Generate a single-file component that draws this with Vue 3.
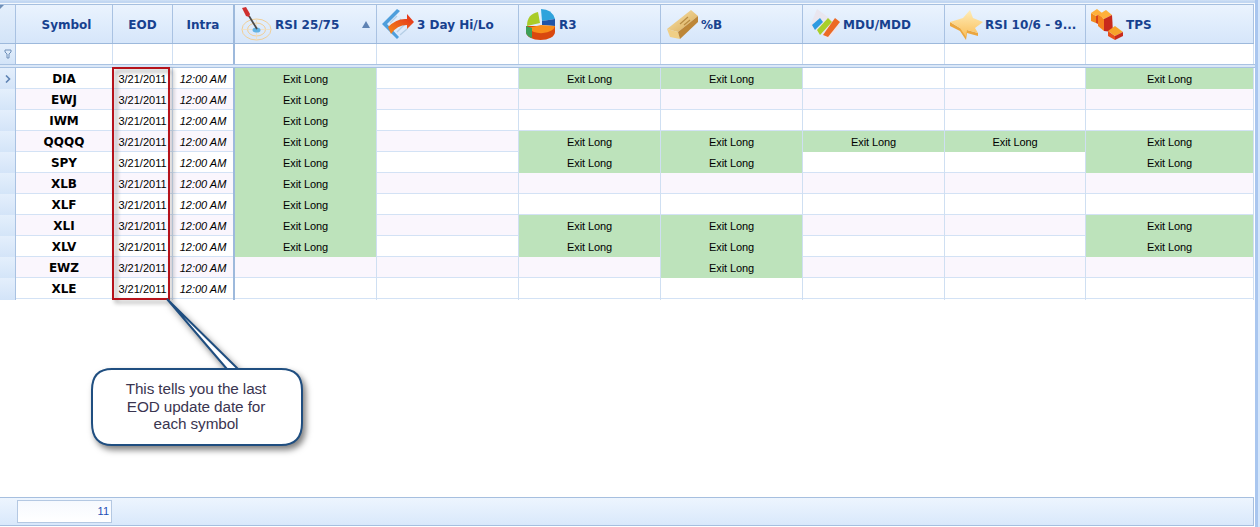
<script setup>
const columns = [
  { label: 'RSI 25/75', icon: 'target', sorted: true },
  { label: '3 Day Hi/Lo', icon: 'arrow' },
  { label: 'R3', icon: 'pie' },
  { label: '%B', icon: 'gold' },
  { label: 'MDU/MDD', icon: 'bars' },
  { label: 'RSI 10/6 - 9...', icon: 'star' },
  { label: 'TPS', icon: 'podium' }
]

// 1 = signal shown in that indicator column
const rows = [
  { symbol: 'DIA', signals: [1, 0, 1, 1, 0, 0, 1] },
  { symbol: 'EWJ', signals: [1, 0, 0, 0, 0, 0, 0] },
  { symbol: 'IWM', signals: [1, 0, 0, 0, 0, 0, 0] },
  { symbol: 'QQQQ', signals: [1, 0, 1, 1, 1, 1, 1] },
  { symbol: 'SPY', signals: [1, 0, 1, 1, 0, 0, 1] },
  { symbol: 'XLB', signals: [1, 0, 0, 0, 0, 0, 0] },
  { symbol: 'XLF', signals: [1, 0, 0, 0, 0, 0, 0] },
  { symbol: 'XLI', signals: [1, 0, 1, 1, 0, 0, 1] },
  { symbol: 'XLV', signals: [1, 0, 1, 1, 0, 0, 1] },
  { symbol: 'EWZ', signals: [0, 0, 0, 1, 0, 0, 0] },
  { symbol: 'XLE', signals: [0, 0, 0, 0, 0, 0, 0] }
]
</script>

<template>
  <div class="screen">
    <svg class="icon-defs" width="0" height="0">
      <defs>
        <linearGradient id="goldTop" x1="0" y1="0" x2="1" y2="1">
          <stop offset="0" stop-color="#f8e6b4" />
          <stop offset="1" stop-color="#d9a850" />
        </linearGradient>
        <linearGradient id="starFill" x1="0" y1="0" x2="0" y2="1">
          <stop offset="0" stop-color="#ffedb8" />
          <stop offset="1" stop-color="#f9bf5c" />
        </linearGradient>
        <linearGradient id="arrowFill" x1="0" y1="1" x2="1" y2="0">
          <stop offset="0" stop-color="#f48a1c" />
          <stop offset="1" stop-color="#e32a1a" />
        </linearGradient>
      </defs>
    </svg>

    <div class="grid-panel">
      <div class="top-strip"></div>

      <div class="row header-row">
        <div class="cell indicator corner"></div>
        <div class="cell head-text symbol-head">Symbol</div>
        <div class="cell head-text">EOD</div>
        <div class="cell head-text thick">Intra</div>
        <div v-for="col in columns" :key="col.label" class="cell head-icon">
          <svg class="col-icon" viewBox="0 0 36 36">
            <g v-if="col.icon === 'target'">
              <ellipse cx="17.5" cy="23.5" rx="14.5" ry="10.5" fill="none" stroke="#f0cf98" />
              <ellipse cx="17.5" cy="23.5" rx="9" ry="6.5" fill="none" stroke="#f0cf98" />
              <path d="M3 23.5 H32 M17.5 13 V34" stroke="#f3dcb6" stroke-width="0.7" />
              <ellipse cx="17.5" cy="24" rx="4" ry="2.6" fill="#62b3e4" />
              <path d="M18 23 L10 10" stroke="#4a4a4a" stroke-width="1.8" />
              <path d="M3 2 L7 1 L11 8 L10 11 L7 10 Z" fill="#cf3030" />
            </g>
            <g v-else-if="col.icon === 'arrow'">
              <path d="M1 18 L16 3 L19 5 L6 18 L18 31 L16 33 Z" fill="#4f9fdc" />
              <path d="M9 17 L16 10 M12 21 L20 13 M16 26 L24 18 M19 29 L26 23" stroke="#b6cfe6" stroke-width="1.4" />
              <path d="M7 21 Q16 12 26 13 L26 8 L33 16 L26 23 L26 19 Q16 19 10 28 Z" fill="url(#arrowFill)" />
            </g>
            <g v-else-if="col.icon === 'pie'">
              <path d="M3 20 V26 A14.5 8 0 0 0 32 26 V20 Z" fill="#d9480f" />
              <path d="M17 17 L4 20 Q4 8 15 6 Z" fill="#a9cc28" />
              <path d="M18 3 Q29 3 32 13 L19 15 Z" fill="#2fa3dc" />
              <path d="M19 15 L32 13 L32 20 L19 19 Z" fill="#1f55a8" />
              <path d="M5 22 L18 19 L32 20 A14 8 0 0 1 5 22 Z" fill="#f88e1a" />
              <path d="M3 20 L9 22 V32 Q3 30 3 26 Z" fill="#3da05a" />
            </g>
            <g v-else-if="col.icon === 'gold'">
              <path d="M2 23 L26 4 L33 10 L13 26 Z" fill="url(#goldTop)" />
              <path d="M2 23 L13 26 L15 33 L5 31 Z" fill="#f0cf86" />
              <path d="M13 26 L33 10 L33 16 L15 33 Z" fill="#bd8637" />
              <path d="M15 18 L23 11 M19 19 L25 14" stroke="#b88c44" stroke-width="1.2" />
            </g>
            <g v-else-if="col.icon === 'bars'">
              <path d="M10 3 L33 20 L22 34 L3 20 Z" fill="#e9e6ef" />
              <path d="M5 19 L13 12 L16 16 L8 24 Z" fill="#2f9ae0" />
              <path d="M10 24 L21 12 L25 16 L13 29 Z" fill="#a8cf2a" />
              <path d="M16 29 L28 12 L33 16 L21 31 Z" fill="#ec6a25" />
            </g>
            <g v-else-if="col.icon === 'star'">
              <path d="M1 16 L1 20 L11 25 L17 34 L18 27 L29 30 L29 27 L11 22 Z" fill="#eba63f" />
              <path d="M1 16 L14 12 L21 4 L24 12 L34 16 L26 22 L29 27 L18 24 L17 31 L11 22 Z" fill="url(#starFill)" />
            </g>
            <g v-else>
              <path d="M1 7 L6 10 V17 L1 15 Z" fill="#f08a1e" />
              <path d="M1 7 L7 3 L12 7 L6 10 Z" fill="#ffb03a" />
              <path d="M6 10 L12 7 V20 L6 17 Z" fill="#d8431c" />
              <path d="M8 9 L14 13 V25 L8 20 Z" fill="#f5821f" />
              <path d="M8 9 L16 4 L22 9 L14 13 Z" fill="#ffb03a" />
              <path d="M14 13 L22 9 L23 26 L14 25 Z" fill="#c82a1c" />
              <path d="M18 25 L25 30 V34 L18 30 Z" fill="#e8501c" />
              <path d="M18 25 L25 20 L33 26 L25 30 Z" fill="#f6a32a" />
              <path d="M25 30 L33 26 V30 L25 34 Z" fill="#c82a1c" />
            </g>
          </svg>
          <span class="head-label">{{ col.label }}</span>
          <svg v-if="col.sorted" class="sort-mark" viewBox="0 0 8 7">
            <path d="M4 0 L8 7 H0 Z" />
          </svg>
        </div>
      </div>

      <div class="row filter-row">
        <div class="cell indicator">
          <svg class="filter-icon" viewBox="0 0 8 10">
            <path d="M1 1 H7 V3 L5 5 V9 H3 V5 L1 3 Z" />
          </svg>
        </div>
        <div class="cell"></div>
        <div class="cell"></div>
        <div class="cell thick"></div>
        <div v-for="col in columns" :key="col.label" class="cell"></div>
      </div>

      <div class="body-gap"></div>

      <div
        v-for="(row, i) in rows"
        :key="row.symbol"
        class="row data-row"
        :class="{ alt: i % 2 === 1 }"
      >
        <div class="cell indicator">
          <svg v-if="i === 0" class="current-mark" viewBox="0 0 6 8">
            <path d="M1 0.5 L4.5 4 L1 7.5" />
          </svg>
        </div>
        <div class="cell symbol">{{ row.symbol }}</div>
        <div class="cell date">3/21/2011</div>
        <div class="cell time thick">12:00 AM</div>
        <div
          v-for="(on, c) in row.signals"
          :key="c"
          class="cell signal"
          :class="{ on: on }"
        >{{ on ? 'Exit Long' : '' }}</div>
      </div>

      <div class="spacer"></div>

      <div class="footer">
        <div class="count-box">11</div>
      </div>
    </div>

    <div class="right-edge"></div>

    <div class="highlight"></div>

    <div class="callout">
      <svg class="callout-shape" viewBox="0 0 222 160">
        <path
          class="shape-line"
          d="M137 72 H191 Q212 72 212 93 V126 Q212 148 191 148 H22 Q2 148 2 126 V93 Q2 72 22 72 H137 L77 2 L148 72 Z"
        />
      </svg>
      <p class="callout-text">This tells you the last EOD update date for each symbol</p>
    </div>
  </div>
</template>

<style scoped>
.screen {
  position: relative;
  display: flex;
  width: 1260px;
  height: 527px;
  overflow: hidden;
  background: #fff;
  font-family: "Liberation Sans", Arial, sans-serif;
}

.icon-defs {
  position: absolute;
}

.grid-panel {
  display: flex;
  flex-direction: column;
  flex: none;
  width: 1255px;
  height: 527px;
}

.right-edge {
  flex: 1;
  background: linear-gradient(to right, #a9c6ef 0, #a9c6ef 3px, #d5e6fb 3px);
}

.top-strip {
  height: 4px;
  flex: none;
  background: linear-gradient(#d5e4f7 0, #c2d7f2 1px, #c2d7f2 3px, #f4f8fd 3px);
}

.row {
  display: grid;
  grid-template-columns: 16px 97px 60px 62px 142px 142px 142px 142px 142px 141px 168px;
  width: 1254px;
  flex: none;
}

.cell {
  box-sizing: border-box;
  border-right: 1px solid #cfdff2;
  min-width: 0;
}

.cell.thick {
  border-right: 2px solid #9db9dc;
}

.indicator {
  background: linear-gradient(#e4effc, #d3e4f8);
  border-right: 1px solid #a9c2e2;
  display: flex;
  align-items: center;
  justify-content: center;
}

.header-row {
  height: 40px;
  background: linear-gradient(#eaf3fe, #d6e6fa);
  border-top: 1px solid #a6bfdf;
  border-bottom: 1px solid #9db9dc;
  box-sizing: border-box;
  color: #17418f;
  font-family: "DejaVu Sans", Verdana, sans-serif;
  font-size: 12px;
  font-weight: bold;
}

.header-row .cell {
  border-right: 1px solid #a9c2e2;
}

.header-row .cell.thick {
  border-right: 2px solid #9db9dc;
}

.corner {
  position: relative;
}

.corner::before {
  content: "";
  position: absolute;
  left: 0;
  top: 0;
  border-top: 4px solid #6f8fb8;
  border-right: 4px solid transparent;
}

.head-text {
  display: flex;
  align-items: center;
  justify-content: center;
  padding-top: 2px;
}

.symbol-head {
  padding-left: 5px;
}

.head-icon {
  display: flex;
  align-items: center;
  padding-left: 4px;
  position: relative;
  white-space: nowrap;
  overflow: hidden;
}

.head-label {
  padding-top: 2px;
}

.col-icon {
  width: 36px;
  height: 36px;
  flex: none;
}

.sort-mark {
  position: absolute;
  right: 6px;
  top: 16px;
  width: 8px;
  height: 7px;
  fill: #5f83b4;
}

.filter-row {
  height: 20px;
  background: #fff;
}

.filter-icon {
  width: 8px;
  height: 10px;
  fill: none;
  stroke: #6f8fb8;
  stroke-width: 1;
}

.body-gap {
  height: 4px;
  flex: none;
  border-top: 1px solid #a9c2e2;
  border-bottom: 1px solid #a9c2e2;
  background: #dbe8f8;
  box-sizing: border-box;
}

.data-row {
  height: 21px;
  background: #fff;
  border-bottom: 1px solid #d3e2f5;
  box-sizing: border-box;
  font-size: 11px;
  line-height: 22px;
  color: #000;
  text-align: center;
}

.data-row.alt {
  background: #faf6fd;
}

.symbol {
  font-family: "DejaVu Sans", Verdana, sans-serif;
  font-size: 12px;
  font-weight: bold;
}

.time {
  font-style: italic;
}

.signal {
  letter-spacing: -0.1px;
}

.signal.on {
  background: #bde3bb;
}

.current-mark {
  width: 6px;
  height: 8px;
  fill: none;
  stroke: #5f83b4;
  stroke-width: 1.6;
}

.spacer {
  flex: 1;
}

.footer {
  height: 29px;
  flex: none;
  box-sizing: border-box;
  margin-bottom: 1px;
  padding: 2px 0 0 17px;
  width: 1254px;
  background: linear-gradient(#edf5fe, #d9e8fb);
  border: 1px solid #a6bfdf;
  border-left: none;
}

.count-box {
  width: 95px;
  height: 23px;
  box-sizing: border-box;
  background: linear-gradient(#f6f9fe, #fff);
  border: 1px solid #b4c8e2;
  color: #1f4fb5;
  font-size: 11px;
  line-height: 21px;
  text-align: right;
  padding-right: 2px;
}

.highlight {
  position: absolute;
  left: 112px;
  top: 67px;
  width: 58px;
  height: 233px;
  box-sizing: border-box;
  border: 2px solid #b5121b;
  filter: drop-shadow(3px 3px 2px rgba(0, 0, 0, 0.4));
}

.callout {
  position: absolute;
  left: 90px;
  top: 297px;
  width: 222px;
  height: 160px;
}

.callout-shape {
  display: block;
  width: 222px;
  height: 160px;
  filter: drop-shadow(3px 4px 3px rgba(0, 0, 0, 0.5));
}

.shape-line {
  fill: #fff;
  stroke: #1f4e80;
  stroke-width: 2;
}

.callout-text {
  position: absolute;
  left: 26px;
  top: 83px;
  width: 160px;
  margin: 0;
  font-size: 15.3px;
  line-height: 17.5px;
  letter-spacing: -0.1px;
  text-align: center;
  color: #3a3550;
}
</style>
